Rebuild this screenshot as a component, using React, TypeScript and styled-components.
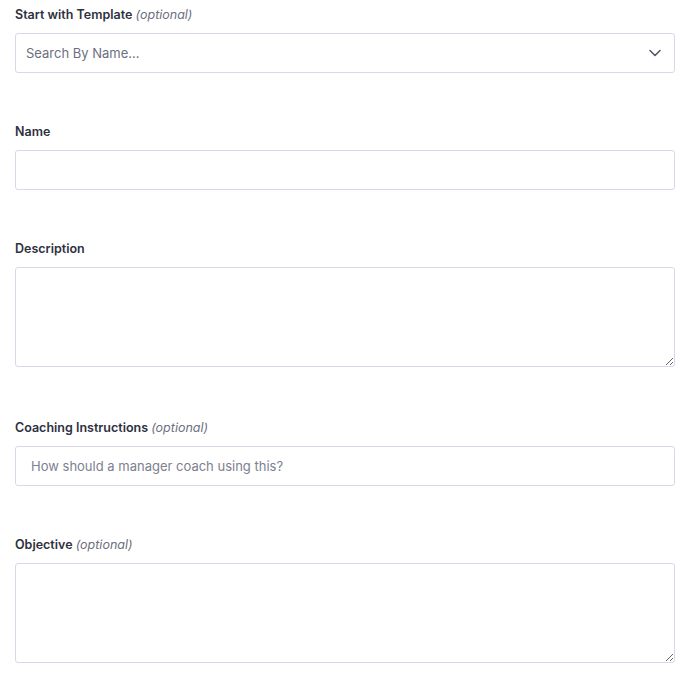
import styled, { createGlobalStyle } from "styled-components";

const GlobalStyle = createGlobalStyle`
    body {
        margin: 0;
        background: #ffffff;
        font-family: Inter, "Noto Sans", sans-serif;
        color: #2e3140;
    }
    * {
        box-sizing: border-box;
    }
`;

const Form = styled.form`
    display: flex;
    flex-direction: column;
    gap: 50px;
    padding: 6px 18px 0 15px;
`;

const Field = styled.div`
    display: flex;
    flex-direction: column;
    gap: 9px;
`;

const Label = styled.label`
    font-size: 12.5px;
    line-height: 18px;
    font-weight: 600;
    color: #2e3140;
`;

const Optional = styled.span`
    font-weight: 400;
    font-style: italic;
    color: #6c6f80;
`;

const SelectBox = styled.div`
    display: flex;
    align-items: center;
    justify-content: space-between;
    height: 40px;
    padding: 0 12px 0 10px;
    border: 1px solid #d9d8e6;
    border-radius: 3px;
    background: #fff;
    font-size: 13px;
    color: #6c6f80;
`;

const TextInput = styled.input<{ $pad?: number }>`
    display: block;
    width: 100%;
    height: 40px;
    padding: 0 ${(p) => p.$pad ?? 10}px;
    border: 1px solid #d9d8e6;
    border-radius: 3px;
    background: #fff;
    font-family: inherit;
    font-size: 13px;
    color: #2e3140;
    outline: none;
    &::placeholder {
        color: #7d8091;
    }
`;

const TextArea = styled.textarea`
    display: block;
    width: 100%;
    height: 100px;
    margin-bottom: 2px;
    padding: 10px;
    border: 1px solid #d9d8e6;
    border-radius: 3px;
    background: #fff;
    font-family: inherit;
    font-size: 13px;
    resize: vertical;
    outline: none;
`;

function Chevron() {
    return (
        <svg width="14" height="14" viewBox="0 0 14 14" fill="none">
            <path d="M2 4.5 L7 9.5 L12 4.5" stroke="#555866" strokeWidth="1.6" strokeLinecap="round" strokeLinejoin="round" />
        </svg>
    );
}

function App() {
    return (
        <>
            <GlobalStyle />
            <Form>
                <Field>
                    <Label>
                        Start with Template <Optional>(optional)</Optional>
                    </Label>
                    <SelectBox>
                        <span>Search By Name...</span>
                        <Chevron />
                    </SelectBox>
                </Field>
                <Field>
                    <Label>Name</Label>
                    <TextInput />
                </Field>
                <Field>
                    <Label>Description</Label>
                    <TextArea />
                </Field>
                <Field>
                    <Label>
                        Coaching Instructions <Optional>(optional)</Optional>
                    </Label>
                    <TextInput $pad={15} placeholder="How should a manager coach using this?" />
                </Field>
                <Field>
                    <Label>
                        Objective <Optional>(optional)</Optional>
                    </Label>
                    <TextArea />
                </Field>
            </Form>
        </>
    );
}

export default App;
